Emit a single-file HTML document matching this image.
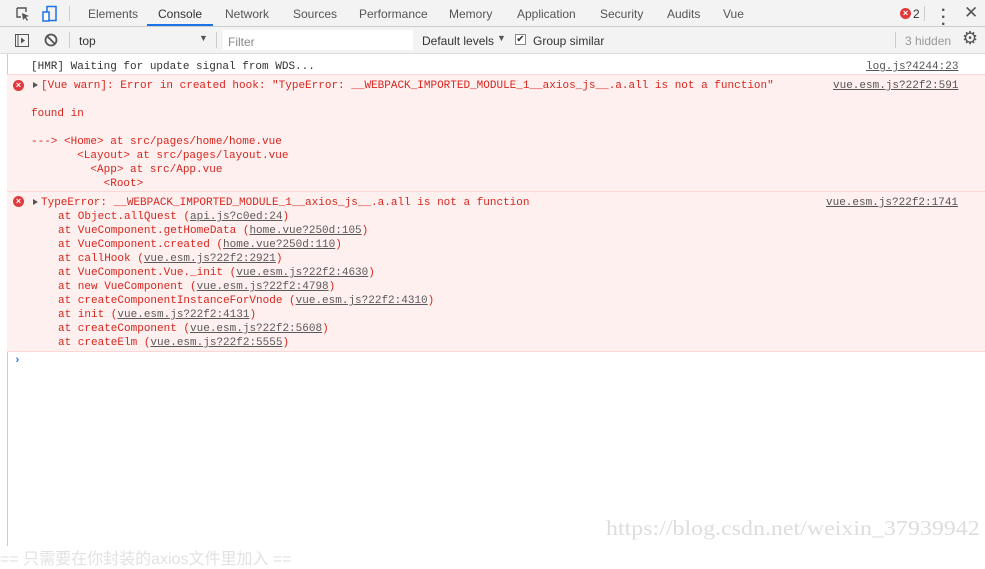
<!DOCTYPE html>
<html><head><meta charset="utf-8"><style>
*{margin:0;padding:0;box-sizing:border-box}
body{width:985px;height:562px;background:#fff;position:relative;overflow:hidden;font-family:"Liberation Sans",sans-serif;font-size:12px;color:#333}
.tb{position:absolute;left:0;top:0;width:985px;height:27px;background:#f3f3f3;border-bottom:1px solid #ccc}
.tab{position:absolute;top:7px;font-size:12px;color:#555}
.tb2{position:absolute;left:0;top:27px;width:985px;height:27px;background:#f3f3f3;border-bottom:1px solid #ddd}
.m{font-family:"Liberation Mono",monospace;font-size:11px;position:absolute;white-space:pre;line-height:14px}
.r{color:#d7261e}
.u{text-decoration:underline;color:#555}
.ru{text-decoration:underline;color:#5a5a5a}
.err{position:absolute;left:7px;width:978px;background:#fff0f0;border-top:1px solid #ffd6d6;border-bottom:1px solid #ffd6d6}
.x{position:absolute;left:13px;width:11px;height:11px;border-radius:50%;background:#e0393e;color:#fff;font-size:9px;line-height:11px;text-align:center;font-weight:bold}
.tri{position:absolute;left:33px;width:0;height:0;border-left:5px solid #555;border-top:3.5px solid transparent;border-bottom:3.5px solid transparent}
</style></head><body>
<div class="tb">
<svg style="position:absolute;left:15px;top:6px" width="16" height="16" viewBox="0 0 16 16"><path d="M2 2h9v4M2 2v9h4" fill="none" stroke="#555" stroke-width="1.4"/><path d="M7 7l7 3-3 1 2 3-1 1-2-3-2 2z" fill="#555"/></svg>
<svg style="position:absolute;left:41px;top:5px" width="18" height="18" viewBox="0 0 18 18"><rect x="6" y="1.5" width="9" height="14" fill="none" stroke="#1a73e8" stroke-width="1.5"/><rect x="2" y="7" width="6" height="9" fill="#fff" stroke="#1a73e8" stroke-width="1.5"/></svg>
<div style="position:absolute;left:69px;top:6px;width:1px;height:15px;background:#ccc"></div>
<span class="tab" style="left:88px">Elements</span>
<span class="tab" style="left:158px;color:#333">Console</span>
<div style="position:absolute;left:147px;top:24px;width:66px;height:2px;background:#1a73e8"></div>
<span class="tab" style="left:225px">Network</span>
<span class="tab" style="left:293px">Sources</span>
<span class="tab" style="left:359px">Performance</span>
<span class="tab" style="left:449px">Memory</span>
<span class="tab" style="left:517px">Application</span>
<span class="tab" style="left:600px">Security</span>
<span class="tab" style="left:667px">Audits</span>
<span class="tab" style="left:723px">Vue</span>
<div class="x" style="left:900px;top:8px">×</div>
<span class="tab" style="left:913px;color:#333">2</span>
<div style="position:absolute;left:924px;top:6px;width:1px;height:15px;background:#ccc"></div>
<span style="position:absolute;left:941px;top:3px;font-size:16px;font-weight:bold;color:#555;line-height:7px">.<br>.<br>.</span>
<span style="position:absolute;left:964px;top:3px;font-size:17px;color:#555">✕</span>
</div>
<div class="tb2">
<svg style="position:absolute;left:15px;top:7px" width="14" height="13" viewBox="0 0 14 13"><rect x="0.5" y="0.5" width="13" height="12" fill="none" stroke="#555"/><path d="M3 1v11" stroke="#555"/><path d="M6 3.5l4 3-4 3z" fill="#555"/></svg>
<svg style="position:absolute;left:44px;top:6px" width="14" height="14" viewBox="0 0 14 14"><circle cx="7" cy="7" r="5.5" fill="none" stroke="#555" stroke-width="1.8"/><path d="M3 3l8 8" stroke="#555" stroke-width="1.8"/></svg>
<div style="position:absolute;left:69px;top:5px;width:1px;height:16px;background:#ccc"></div>
<span style="position:absolute;left:79px;top:7px;color:#333">top</span>
<span style="position:absolute;left:199px;top:6px;font-size:9px;color:#555">▼</span>
<div style="position:absolute;left:216px;top:5px;width:1px;height:16px;background:#ccc"></div>
<div style="position:absolute;left:223px;top:3px;width:190px;height:20px;background:#fff"></div>
<span style="position:absolute;left:228px;top:8px;color:#888">Filter</span>
<span style="position:absolute;left:422px;top:7px;color:#333">Default levels</span>
<span style="position:absolute;left:497px;top:6px;font-size:9px;color:#555">▼</span>
<div style="position:absolute;left:515px;top:7px;width:11px;height:11px;border:1px solid #888;background:#fff;font-size:10px;line-height:9px;text-align:center">✔</div>
<span style="position:absolute;left:533px;top:7px;color:#333">Group similar</span>
<div style="position:absolute;left:895px;top:5px;width:1px;height:16px;background:#ccc"></div>
<span style="position:absolute;left:905px;top:7px;color:#999">3 hidden</span>
<span style="position:absolute;left:962px;top:1px;font-size:18px;color:#555">⚙</span>
</div>
<div style="position:absolute;left:7px;top:54px;width:1px;height:492px;background:#ccc"></div>

<div class="m" style="left:31px;top:60px;color:#333">[HMR] Waiting for update signal from WDS...</div>
<div class="m u" style="left:866px;top:60px">log.js?4244:23</div>

<div class="err" style="top:74px;height:118px"></div>
<div class="x" style="top:80px">×</div><div class="tri" style="top:82px"></div>
<div class="m r" style="left:41px;top:79px">[Vue warn]: Error in created hook: "TypeError: __WEBPACK_IMPORTED_MODULE_1__axios_js__.a.all is not a function"</div>
<div class="m u" style="left:833px;top:79px">vue.esm.js?22f2:591</div>
<div class="m r" style="left:31px;top:107px">found in

---> &lt;Home&gt; at src/pages/home/home.vue
       &lt;Layout&gt; at src/pages/layout.vue
         &lt;App&gt; at src/App.vue
           &lt;Root&gt;</div>

<div class="err" style="top:191px;height:161px"></div>
<div class="x" style="top:196px">×</div><div class="tri" style="top:199px"></div>
<div class="m r" style="left:41px;top:196px">TypeError: __WEBPACK_IMPORTED_MODULE_1__axios_js__.a.all is not a function</div>
<div class="m u" style="left:826px;top:196px">vue.esm.js?22f2:1741</div>
<div class="m r" style="left:58px;top:210px">at Object.allQuest (<span class="ru">api.js?c0ed:24</span>)
at VueComponent.getHomeData (<span class="ru">home.vue?250d:105</span>)
at VueComponent.created (<span class="ru">home.vue?250d:110</span>)
at callHook (<span class="ru">vue.esm.js?22f2:2921</span>)
at VueComponent.Vue._init (<span class="ru">vue.esm.js?22f2:4630</span>)
at new VueComponent (<span class="ru">vue.esm.js?22f2:4798</span>)
at createComponentInstanceForVnode (<span class="ru">vue.esm.js?22f2:4310</span>)
at init (<span class="ru">vue.esm.js?22f2:4131</span>)
at createComponent (<span class="ru">vue.esm.js?22f2:5608</span>)
at createElm (<span class="ru">vue.esm.js?22f2:5555</span>)</div>
<div class="m" style="left:14px;top:354px;color:#1a73e8;font-weight:bold">›</div>

<div style="position:absolute;left:606px;top:516px;font-family:'Liberation Serif',serif;font-size:21px;color:#ddd;white-space:nowrap;transform-origin:0 0;transform:scaleX(1.14)">https://blog.csdn.net/weixin_37939942</div>
<div style="position:absolute;left:0px;top:545px;font-family:'Liberation Sans','Noto Sans CJK SC',sans-serif;font-size:16px;color:#e2e2e2;white-space:nowrap">== 只需要在你封装的axios文件里加入 ==</div>
</body></html>
